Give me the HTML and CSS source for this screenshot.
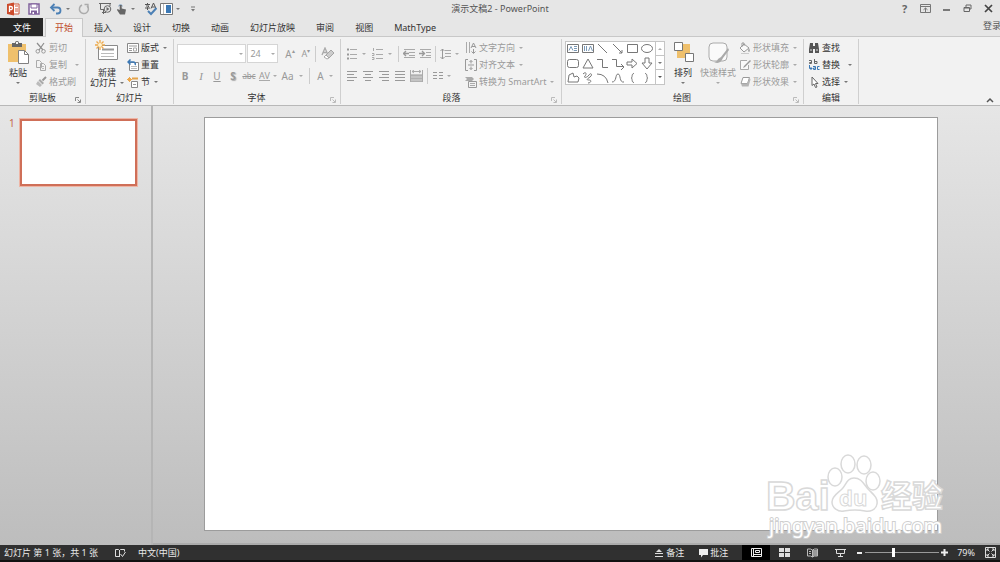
FILE: index.html
```html
<!DOCTYPE html>
<html lang="zh-CN">
<head>
<meta charset="utf-8">
<title>演示文稿2 - PowerPoint</title>
<link rel="stylesheet" href="styles.css">
</head>
<body>
<header class="titlebar">
  <div class="quick">
    <svg class="ico" width="14" height="14" viewBox="0 0 14 14"><path d="M5 2h8v10H5z" fill="#fff" stroke="#d0563a"/><path d="M9 4h3M9 7h3M9 9h3" stroke="#d0563a"/><path d="M1 2l7-1.500v13L1 12z" fill="#cc4b2c"/><path d="M3.500 10V4.500h1.300a1.500 1.500 0 010 3.200H3.500" fill="none" stroke="#fff" stroke-width="1.300"/></svg>
    <button class="tool save" aria-label="保存"><svg class="ico" width="12" height="12" viewBox="0 0 12 12"><path d="M1 1h10v10H1z" fill="#fff" stroke="#80619c" stroke-width="1.500"/><path d="M3 1h6v4H3z" fill="#fff" stroke="#80619c"/><path d="M3 7.500h6V11H3z" fill="#80619c"/><path d="M4.500 9h1.500v2H4.500z" fill="#fff"/></svg></button>
    <button class="tool undo" aria-label="撤消"><svg class="ico" width="14" height="12" viewBox="0 0 14 12"><path d="M2 4.500h6.500a3 3 0 010 6H7" fill="none" stroke="#4c80b5" stroke-width="1.800"/><path d="M5.500 1L2 4.500 5.500 8" fill="none" stroke="#4c80b5" stroke-width="1.800"/></svg><i class="caret"></i></button>
    <button class="tool redo" aria-label="恢复"><svg class="ico" width="12" height="12" viewBox="0 0 12 12"><path d="M4 2a4.500 4.500 0 105 .8" fill="none" stroke="#ababab" stroke-width="1.500"/><path d="M6.500 1.500h3.500V5" fill="none" stroke="#ababab" stroke-width="1.300"/></svg></button>
    <button class="tool show" aria-label="从头开始"><svg class="ico" width="13" height="13" viewBox="0 0 13 13"><path d="M0 1.500h12M1.500 1.500v6H5M11 1.500V4M3 10.500h4M4.500 8v4" fill="none" stroke="#666"/><circle cx="8.500" cy="7" r="3.300" fill="#e6e6e6" stroke="#666"/><path d="M7.500 5l3 2-3 2z" fill="#666"/></svg></button>
    <button class="tool touch" aria-label="触摸模式"><svg class="ico" width="12" height="14" viewBox="0 0 12 14"><path d="M2.500 4a2.500 2.500 0 014 0" fill="none" stroke="#4c80b5"/><path d="M3.700 3v5L1.500 7l-.5 1L4 12.500h5l1-5-4.300-1V3z" fill="#666"/></svg><i class="caret"></i></button>
    <button class="tool spell" aria-label="拼写"><svg class="ico" width="13" height="14" viewBox="0 0 13 14"><path d="M1 2.500h5M3.500 1v1.500M2 4h3L3.500 5.500V8M1 6h5" fill="none" stroke="#555"/><path d="M7 6.500L9.500 1 12 6.500M8 5h3" fill="none" stroke="#555"/><path d="M4 9l3 3 5.500-6" fill="none" stroke="#4c80b5" stroke-width="2"/></svg></button>
    <button class="tool pane" aria-label="窗格"><svg class="ico" width="13" height="12" viewBox="0 0 13 12"><path d="M.5 .5h12v11H.5z" fill="#fff" stroke="#777"/><path d="M6 2h5v8H6z" fill="#3b78b5"/><path d="M3.500 1v10" stroke="#bbb"/></svg><i class="caret"></i></button>
    <button class="tool" aria-label="自定义快速访问工具栏"><svg class="ico" width="6" height="8" viewBox="0 0 6 8"><path d="M1 2h4" stroke="#777"/><path d="M1 4h4L3 6.500z" fill="#777"/></svg></button>
  </div>
  <h1 class="title">演示文稿2 - PowerPoint</h1>
  <div class="window-tools">
    <button class="win help" aria-label="帮助">?</button>
    <button class="win" aria-label="功能区显示选项"><svg class="ico" width="11" height="9" viewBox="0 0 11 9"><path d="M.5 .5h10v8H.5zM.5 2.500h10M5.500 4v4M3.500 5.800l2-1.800 2 1.800" fill="none" stroke="#777"/></svg></button>
    <button class="win" aria-label="最小化"><svg class="ico" width="9" height="9" viewBox="0 0 9 9"><path d="M1 6h7" stroke="#555" stroke-width="1.500"/></svg></button>
    <button class="win" aria-label="还原"><svg class="ico" width="9" height="9" viewBox="0 0 9 9"><path d="M3 3V1h5v4H6.500M1 3.500h5.500v4H1zM1 4h5" fill="none" stroke="#666"/></svg></button>
    <button class="win" aria-label="关闭"><svg class="ico" width="9" height="9" viewBox="0 0 9 9"><path d="M1 1l7 7M8 1L1 8" stroke="#444" stroke-width="1.700"/></svg></button>
  </div>
</header>
<nav class="tabs">
  <button class="tab file">文件</button>
  <button class="tab active">开始</button>
  <button class="tab">插入</button>
  <button class="tab">设计</button>
  <button class="tab">切换</button>
  <button class="tab">动画</button>
  <button class="tab">幻灯片放映</button>
  <button class="tab">审阅</button>
  <button class="tab">视图</button>
  <button class="tab">MathType</button>
  <a class="signin" href="#">登录</a>
</nav>
<section class="ribbon">
  <div class="group clipboard">
    <div class="body">
      <button class="big"><svg class="ico" width="23" height="26" viewBox="0 0 23 26"><path d="M1 4h18v18H1z" fill="#efc06c"/><path d="M5 3h3a2 2 0 014 0h3v4H5z" fill="#666"/><path d="M9 2h2v2H9z" fill="#f2f2f2"/><path d="M11.500 10.500h6l4 4v9h-10z" fill="#fff" stroke="#808080"/><path d="M17.500 10.500v4h4" fill="none" stroke="#808080"/></svg><span>粘贴</span><i class="caret"></i></button>
      <div class="stack">
        <button class="small off"><svg class="ico" width="12" height="12" viewBox="0 0 12 12"><path d="M2 1l6 7M9 1L4 8" stroke="#8d8d8d" stroke-width="1.200"/><circle cx="2.800" cy="9.300" r="1.800" fill="none" stroke="#999"/><circle cx="8.500" cy="9.300" r="1.800" fill="none" stroke="#999"/></svg>剪切</button>
        <button class="small off wide"><svg class="ico" width="12" height="12" viewBox="0 0 12 12"><path d="M1.500 1.500h3l2 2v5h-5zM5.500 4.500h3l2 2v5h-5z" fill="#f2f2f2" stroke="#aaa"/><path d="M7 7.500h2M7 9.500h2" stroke="#bbb"/></svg>复制<i class="caret"></i></button>
        <button class="small off"><svg class="ico" width="12" height="12" viewBox="0 0 12 12"><path d="M11 1L7.500 4.500" stroke="#999" stroke-width="2"/><path d="M5 3l4 4-1.500 1.500-4-4z" fill="#aaa"/><path d="M3 5l4 4-2 2-4-3z" fill="#bbb"/></svg>格式刷</button>
      </div>
    </div>
    <div class="caption">剪贴板<svg class="launch" width="6" height="6" viewBox="0 0 6 6"><path d="M.5 4V.5H4M2.500 2.500L5 5M5.500 2.500v3h-3" fill="none" stroke="#888"/></svg></div>
  </div>
  <div class="group slides">
    <div class="body">
      <button class="big"><svg class="ico" width="24" height="24" viewBox="0 0 24 24"><path d="M3.500 5.500h19v14h-19z" fill="#fff" stroke="#8a8a8a"/><path d="M7 9.500h12" stroke="#999" stroke-width="2"/><path d="M6 13.500h13M6 16.500h13" stroke="#bbb"/><path d="M5 0v10M0 5h10M1.500 1.500l7 7M8.500 1.500l-7 7" stroke="#eda84a" stroke-width="1.300"/><circle cx="5" cy="5" r="2" fill="#fff2cc"/></svg><span>新建</span><span>幻灯片<i class="caret"></i></span></button>
      <div class="stack">
        <button class="small"><svg class="ico" width="12" height="12" viewBox="0 0 12 12"><path d="M.5 1.500h11v9H.5z" fill="#fff" stroke="#888"/><path d="M2 4h8M2 6.500h3M2 8.500h3" stroke="#999"/><path d="M6.500 6h3v3h-3z" fill="none" stroke="#aaa"/></svg>版式<i class="caret"></i></button>
        <button class="small"><svg class="ico" width="12" height="12" viewBox="0 0 12 12"><path d="M2.500 3.500h9v8h-9z" fill="#fff" stroke="#888"/><path d="M4 7.500h6M4 9.500h6" stroke="#bbb"/><path d="M1 3h5a2 2 0 012 3M3.500 .5L1 3l2.500 2.500" fill="none" stroke="#3b78b5" stroke-width="1.500"/></svg>重置</button>
        <button class="small"><svg class="ico" width="12" height="12" viewBox="0 0 12 12"><path d="M5 2.500h6" stroke="#e3a34b" stroke-width="2"/><path d="M4.500 5.500h6v6h-6z" fill="#fff" stroke="#888"/><path d="M6 8.500h3" stroke="#999"/><path d="M2.500 1v5M0 3.500h5M1 2l3 3M4 2L1 5" stroke="#eda84a"/></svg>节<i class="caret"></i></button>
      </div>
    </div>
    <div class="caption">幻灯片</div>
  </div>
  <div class="group font">
    <div class="rows">
      <div class="row">
        <label class="combo name"><select aria-label="字体名称"><option></option></select><i class="caret"></i></label>
        <label class="combo size"><select aria-label="字号"><option>24</option></select><i class="caret"></i></label>
        <button class="glyph grow">A<sup>▴</sup></button>
        <button class="glyph shrink">A<sup>▾</sup></button>
        <i class="sep"></i>
        <button class="glyph" aria-label="清除格式"><svg class="ico" width="14" height="13" viewBox="0 0 14 13"><path d="M1 8l3-7 3 7M2 5.500h4" fill="none" stroke="#aaa" stroke-width="1.300"/><path d="M5 8l5-5 3 3-5 5z" fill="#ccc" stroke="#a5a5a5"/><path d="M5 8l3 3-2 1-3-2z" fill="#fff" stroke="#aaa"/></svg></button>
      </div>
      <div class="row">
        <button class="glyph"><b>B</b></button>
        <button class="glyph serif"><em>I</em></button>
        <button class="glyph"><u>U</u></button>
        <button class="glyph shadow"><b>S</b></button>
        <button class="glyph abc"><s>abc</s></button>
        <button class="glyph spacing"><span class="av">AV</span><i class="caret"></i></button>
        <button class="glyph case">Aa<i class="caret"></i></button>
        <i class="sep"></i>
        <button class="glyph color">A<i class="caret"></i></button>
      </div>
    </div>
    <div class="caption">字体<svg class="launch" width="6" height="6" viewBox="0 0 6 6"><path d="M.5 4V.5H4M2.500 2.500L5 5M5.500 2.500v3h-3" fill="none" stroke="#bbb"/></svg></div>
  </div>
  <div class="group para">
    <div class="body">
      <div class="rows">
        <div class="row">
          <button class="pic list" aria-label="项目符号"><svg class="ico" width="12" height="12" viewBox="0 0 12 12"><path d="M4 1.500h7M4 6.500h7M4 10.500h7" stroke="#aaa"/><path d="M1 1.500h2M1 6.500h2M1 10.500h2" stroke="#999" stroke-width="2"/></svg><i class="caret"></i></button>
          <button class="pic list" aria-label="编号"><svg class="ico" width="12" height="12" viewBox="0 0 12 12"><path d="M4 1.500h7M4 6.500h7M4 10.500h7" stroke="#aaa"/><path d="M1.500 0v3M0 5.500h2v2H0M0 9.500h2v2H0" fill="none" stroke="#aaa"/></svg><i class="caret"></i></button>
          <i class="sep"></i>
          <button class="pic" aria-label="降低列表级别"><svg class="ico" width="12" height="11" viewBox="0 0 12 11"><path d="M1 1.500h11M6 4.500h6M6 7.500h6M1 9.500h11" stroke="#aaa"/><path d="M0 5.500h6M3 3L.5 5.500 3 8" fill="none" stroke="#999" stroke-width="1.300"/></svg></button>
          <button class="pic" aria-label="提高列表级别"><svg class="ico" width="12" height="11" viewBox="0 0 12 11"><path d="M1 1.500h11M7 4.500h5M7 7.500h5M1 9.500h11" stroke="#aaa"/><path d="M0 5.500h6M3 3l2.500 2.500L3 8" fill="none" stroke="#999" stroke-width="1.300"/></svg></button>
          <i class="sep"></i>
          <button class="pic" aria-label="行距"><svg class="ico" width="12" height="12" viewBox="0 0 12 12"><path d="M5 2.500h6M5 5.500h6M5 8.500h6" stroke="#aaa"/><path d="M2.500 1v10M.5 3l2-2 2 2M.5 9l2 2 2-2" fill="none" stroke="#999"/></svg><i class="caret"></i></button>
        </div>
        <div class="row">
          <button class="pic" aria-label="左对齐"><svg class="ico" width="12" height="10" viewBox="0 0 12 10"><path d="M1 .5h10M1 3.500h7M1 6.500h10M1 9.500h7" stroke="#999"/></svg></button>
          <button class="pic" aria-label="居中"><svg class="ico" width="12" height="10" viewBox="0 0 12 10"><path d="M1 .5h10M3 3.500h6M1 6.500h10M3 9.500h6" stroke="#999"/></svg></button>
          <button class="pic" aria-label="右对齐"><svg class="ico" width="12" height="10" viewBox="0 0 12 10"><path d="M1 .5h10M4 3.500h7M1 6.500h10M4 9.500h7" stroke="#999"/></svg></button>
          <button class="pic" aria-label="两端对齐"><svg class="ico" width="12" height="10" viewBox="0 0 12 10"><path d="M1 .5h10M1 3.500h10M1 6.500h10M1 9.500h10" stroke="#999"/></svg></button>
          <button class="pic" aria-label="分散对齐"><svg class="ico" width="13" height="12" viewBox="0 0 13 12"><path d="M.5 0v12M12.500 0v12M2 1.500h9M4 0L2 1.500 4 3M9 0l2 1.500L9 3" fill="none" stroke="#aaa"/><path d="M1 4h11v8H1z" fill="#c4c4c4"/><path d="M1 5.500h11M1 8.500h11M1 11.500h11" stroke="#b0b0b0"/></svg></button>
          <i class="sep"></i>
          <button class="pic" aria-label="分栏"><svg class="ico" width="12" height="10" viewBox="0 0 12 10"><path d="M1 1.500h4M1 4.500h4M1 7.500h4M7 1.500h4M7 4.500h4M7 7.500h4" stroke="#999"/></svg><i class="caret"></i></button>
        </div>
      </div>
      <div class="stack">
        <button class="small off"><svg class="ico" width="12" height="12" viewBox="0 0 12 12"><path d="M1.500 0v11M4.500 0v11" stroke="#aaa"/><path d="M6 6l2.500-5L11 6M7 4.500h3M8.500 7v4M6.500 9.500l2 2 2-2" fill="none" stroke="#999"/></svg>文字方向<i class="caret"></i></button>
        <button class="small off"><svg class="ico" width="12" height="12" viewBox="0 0 12 12"><path d="M3 .5H.5v11H3M9 .5h2.500v11H9M3 6h6M6 1.500v3M6 7.500v3M4.500 3L6 1.500 7.500 3M4.500 9L6 10.500 7.500 9" fill="none" stroke="#999"/></svg>对齐文本<i class="caret"></i></button>
        <button class="small off"><svg class="ico" width="12" height="12" viewBox="0 0 12 12"><path d="M0 1h7l2 2-2 2H0l2-2z" fill="#aaa"/><path d="M3.500 5.500h8v6h-8z" fill="#f2f2f2" stroke="#999"/><path d="M5 7.500h5M5 9.500h5" stroke="#aaa"/></svg>转换为 SmartArt<i class="caret"></i></button>
      </div>
    </div>
    <div class="caption">段落<svg class="launch" width="6" height="6" viewBox="0 0 6 6"><path d="M.5 4V.5H4M2.500 2.500L5 5M5.500 2.500v3h-3" fill="none" stroke="#bbb"/></svg></div>
  </div>
  <div class="group draw">
    <div class="body">
      <div class="gallery">
        <svg class="shapes" width="89" height="43" viewBox="0 0 89 43"><g fill="none" stroke="#777"><path d="M1.500 2.500h11v8h-11zM16.500 2.500h11v8h-11z" fill="#fff"/><path d="M3 8.500l2-4 2 4M8 4.500h3M8 6.500h3M8 8.500h3" stroke="#7b9ab8"/><path d="M18.500 4v5M20.500 4v5M22.500 9l2-5 2 5" stroke="#7b9ab8"/><path d="M32 2l9 9M47 2l9 9M56 8v3h-3M61.500 2.500h10v8h-10z"/><ellipse cx="81" cy="6.500" rx="5.500" ry="4"/><rect x="1.500" y="17.500" width="11" height="8" rx="2"/><path d="M22 17l5 9H17zM31 17.500h5.500v8h5.500M46 17.500h4.500v7h7M55 22l3 3-3 3M61 20h5v-3l5 4.500-5 4.500v-3h-5zM79 16v5h-3l5 6 5-6h-3v-5z"/><path d="M3 33l4-2 1 4 3-1 2 2-1 4H2zM17 32c3-3 4 0 2 2s2 2 4-1 4 0 1 2-4 3-1 3 2 3-1 3M31 32q9 0 11 9M46 40c5 0 3-8 6-8s1 9 6 8M68 31.500c-3 0-1 4.500-3 4.500 2 0 0 4.500 3 4.500M79 31.500c3 0 1 4.500 3 4.500-2 0 0 4.500-3 4.500"/></g></svg>
        <div class="scroll">
          <button aria-label="上一行"><i class="caret up"></i></button>
          <button aria-label="下一行"><i class="caret"></i></button>
          <button aria-label="其他"><i class="caret bar"></i></button>
        </div>
      </div>
      <button class="big arrange"><svg class="ico" width="21" height="24" viewBox="0 0 21 24"><path d="M4 4h13v14H4z" fill="#efc06c"/><path d="M1.500 2.500h8v8h-8zM12.500 13.500h8v8h-8z" fill="#fff" stroke="#777"/></svg><span>排列</span><i class="caret"></i></button>
      <button class="big off"><svg class="ico" width="23" height="24" viewBox="0 0 23 24"><rect x="2" y="3" width="18" height="18" rx="4" fill="#fafafa" stroke="#aaa"/><path d="M21 8l-7 9 2 1 6-8zM14 17l-3 2q-1 3-4 3 6 3 9-4z" fill="#aaa"/></svg><span>快速样式</span><i class="caret"></i></button>
      <div class="stack">
        <button class="small off"><svg class="ico" width="12" height="12" viewBox="0 0 12 12"><path d="M5 2l5 4-5 4-4-4zM3 5V1h2v3" fill="#fafafa" stroke="#999"/><path d="M10 6q2 3 0 4-2-1 0-4z" fill="#aaa"/><path d="M2 11.500h8" stroke="#ccc"/></svg>形状填充<i class="caret"></i></button>
        <button class="small off"><svg class="ico" width="12" height="12" viewBox="0 0 12 12"><path d="M8 1.500H1.500v9h8V6" fill="#fafafa" stroke="#aaa"/><path d="M11 1L5 7 4 9l2-1 6-6z" fill="#999"/></svg>形状轮廓<i class="caret"></i></button>
        <button class="small off"><svg class="ico" width="12" height="12" viewBox="0 0 12 12"><path d="M4 1.500h6.500l-2 6H2z" fill="#fff" stroke="#999"/><path d="M2 7.500h6.500l2-6 1 2-2 7H3z" fill="#b5b5b5"/></svg>形状效果<i class="caret"></i></button>
      </div>
    </div>
    <div class="caption">绘图<svg class="launch" width="6" height="6" viewBox="0 0 6 6"><path d="M.5 4V.5H4M2.500 2.500L5 5M5.500 2.500v3h-3" fill="none" stroke="#bbb"/></svg></div>
  </div>
  <div class="group edit">
    <div class="body">
      <div class="stack">
        <button class="small"><svg class="ico" width="12" height="12" viewBox="0 0 12 12"><path d="M2 1h3v3h2V1h3l1 6v4H7V7H5v4H1V7z" fill="#555"/><path d="M2 8h2M8 8h2" stroke="#ddd"/></svg>查找</button>
        <button class="small wide"><svg class="ico" width="12" height="12" viewBox="0 0 12 12"><path d="M1 1.500h2.500v3H1.500V3.500h2M6.500 0v4.500H9v-2H6.500" fill="none" stroke="#666"/><path d="M5 7.500h2.500v3h-2V9h2M11.500 7.500h-2v3h2M1.500 6v3.500H4M2.500 8L4 9.500 2.500 11" fill="none" stroke="#3b78b5"/></svg>替换<i class="caret"></i></button>
        <button class="small"><svg class="ico" width="12" height="12" viewBox="0 0 12 12"><path d="M4 1v8.500L6 8l1.500 3.500L9 11 7.500 7.500H10z" fill="#fff" stroke="#666"/></svg>选择<i class="caret"></i></button>
      </div>
    </div>
    <div class="caption">编辑</div>
  </div>
  <button class="collapse" aria-label="折叠功能区"><svg class="ico" width="8" height="6" viewBox="0 0 8 6"><path d="M1 5l3-3 3 3" fill="none" stroke="#555" stroke-width="1.500"/></svg></button>
</section>
<main class="workspace">
  <aside class="thumbs"><span class="num">1</span><button class="thumb" aria-label="幻灯片 1"></button></aside>
  <section class="editor"><div class="slide"></div></section>
  <svg class="watermark" width="190" height="94" viewBox="0 0 190 94">
    <g fill="#fff" stroke="#d9d9d9" stroke-width="1.500">
      <text class="logo" x="1" y="60">Bai</text>
      <ellipse cx="70" cy="27" rx="7" ry="9"/><ellipse cx="83" cy="14" rx="7" ry="9"/><ellipse cx="99" cy="15" rx="7" ry="9"/><ellipse cx="108" cy="31" rx="7" ry="9"/>
      <path d="M89 28c8 0 10 7 15 12s9 8 8 14-7 8-12 7-15-1-21 0-12-3-12-9 6-9 10-13 5-11 12-11z"/>
      <text class="du" x="74" y="56">du</text>
      <text class="cjk" x="116" y="57">经验</text>
    </g>
    <text class="url" x="4" y="83">jingyan.baidu.com</text>
  </svg>
</main>
<footer class="status">
  <span class="count">幻灯片 第 1 张，共 1 张</span>
  <button class="flat proof" aria-label="拼写检查"><svg class="ico" width="12" height="10" viewBox="0 0 12 10"><path d="M5 8.500H1.500v-7h3l1 1 1-1h4v2M5.500 2v7" fill="none" stroke="#ddd"/><path d="M6.500 6l2 2.500L11.500 4" fill="none" stroke="#ddd"/></svg></button>
  <button class="flat">中文(中国)</button>
  <div class="right">
    <button class="flat notes"><svg class="ico" width="10" height="10" viewBox="0 0 10 10"><path d="M1 5.500h8M1 8.500h8" stroke="#ddd"/><path d="M5 1l3 3H2z" fill="#ddd"/></svg>备注</button>
    <button class="flat notes"><svg class="ico" width="10" height="10" viewBox="0 0 10 10"><path d="M1 1h9v6H5L3 9.500V7H1z" fill="#eee"/></svg>批注</button>
    <div class="views">
      <button class="view on" aria-label="普通视图"><svg class="ico" width="11" height="9" viewBox="0 0 11 9"><path d="M.5 .5h10v8H.5zM2.500 1v7M4.500 2.500h4v2h-4zM3 6.500h7" fill="none" stroke="#eee"/></svg></button>
      <button class="view" aria-label="幻灯片浏览"><svg class="ico" width="11" height="9" viewBox="0 0 11 9"><path d="M0 0h5v4H0zM6 0h5v4H6zM0 5h5v4H0zM6 5h5v4H6z" fill="#ddd"/></svg></button>
      <button class="view" aria-label="阅读视图"><svg class="ico" width="11" height="10" viewBox="0 0 11 10"><path d="M.5 1h3l2 1 2-1h3v7h-3l-2 1-2-1h-3zM5.500 2v7M2 3.500h2M2 5.500h2" fill="none" stroke="#bbb"/><path d="M6 2h4v6H6z" fill="#999"/></svg></button>
      <button class="view" aria-label="幻灯片放映"><svg class="ico" width="11" height="10" viewBox="0 0 11 10"><path d="M0 1.500h11M1.500 2v3.500h8V2M5.500 5.500v3M3 8.500h5" fill="none" stroke="#ddd"/></svg></button>
    </div>
    <button class="flat zoom" aria-label="缩小"><svg class="ico" width="7" height="7" viewBox="0 0 7 7"><path d="M1 4h5" stroke="#eee" stroke-width="2"/></svg></button>
    <input class="range" type="range" min="0" max="100" value="38" aria-label="缩放">
    <button class="flat zoom" aria-label="放大"><svg class="ico" width="7" height="7" viewBox="0 0 7 7"><path d="M0 3.500h7M3.500 0v7" stroke="#eee" stroke-width="2"/></svg></button>
    <span class="percent">79%</span>
    <button class="flat" aria-label="适应窗口"><svg class="ico" width="11" height="11" viewBox="0 0 11 11"><path d="M.5 .5h10v10H.5z" fill="none" stroke="#ddd"/><path d="M2 4V2h2M7 2h2v2M9 7v2H7M4 9H2V7M2 2l2.500 2.500M9 2L6.500 4.500M9 9L6.500 6.500M2 9l2.500-2.500" fill="none" stroke="#ddd"/></svg></button>
  </div>
</footer>
</body>
</html>
```
FILE: styles.css
```css
* { box-sizing: border-box; }
body {
  margin: 0;
  height: 100vh;
  display: flex;
  flex-direction: column;
  overflow: hidden;
  background: #e6e6e6;
  color: #333;
  font: 9px/12px "Noto Sans", "Noto Sans CJK SC", sans-serif;
}
button, select {
  margin: 0;
  padding: 0;
  border: 0;
  background: none;
  color: inherit;
  font: inherit;
  white-space: nowrap;
}
.ico { display: block; flex: none; }
.caret {
  display: inline-block;
  flex: none;
  border: 2px solid transparent;
  border-top-color: #777;
  border-bottom: 0;
}
.caret.up { border-top: 0; border-bottom: 2px solid #aaa; }
.caret.bar { border-top-color: #555; box-shadow: 0 -2px 0 -1px #555; }

.titlebar {
  flex: none;
  height: 17px;
  display: grid;
  grid-template-columns: 1fr auto 1fr;
  align-items: center;
}
.quick { display: flex; align-items: center; padding-left: 6px; }
.tool { display: flex; align-items: center; gap: 3px; }
.save { margin-left: 8px; }
.undo { margin-left: 9px; }
.redo { margin-left: 8px; }
.show { margin-left: 9px; }
.touch { margin-left: 4px; }
.spell { margin-left: 9px; }
.pane { margin: 0 10px 0 3px; }
.title { margin: 0; font-size: 9px; font-weight: 400; color: #555; }
.window-tools { display: flex; justify-content: flex-end; padding-right: 1px; }
.win { width: 21px; display: flex; justify-content: center; align-items: center; }
.help { font-size: 11px; font-weight: 700; color: #666; }

.tabs { flex: none; height: 20px; display: flex; gap: 1px; padding-top: 1px; border-bottom: 1px solid #c8c8c8; }
.tab { padding: 0 10px; border: 1px solid transparent; border-width: 1px 0 0; }
.tab.file { padding: 0 12px 0 13px; margin-right: 1px; background: #262626; color: #fff; }
.tab.active { margin-bottom: -1px; background: #f2f2f2; border: 1px solid #c8c8c8; border-bottom: 0; padding: 0 9px; color: #c0502f; }
.signin { margin-left: auto; margin-right: -1px; padding-top: 2px; color: #555; text-decoration: none; }

.ribbon { flex: none; display: flex; height: 69px; padding-top: 2px; background: #f2f2f2; border-bottom: 1px solid #b8b8b8; }
.group { display: flex; flex-direction: column; flex: none; border-right: 1px solid #cfcfcf; margin-bottom: 1px; padding: 0 4px; }
.body { flex: none; display: flex; height: 51px; }
.caption { display: flex; justify-content: center; align-items: center; position: relative; height: 14px; padding-top: 1px; color: #333; }
.launch { position: absolute; right: 0; bottom: 1px; }
.big { display: flex; flex-direction: column; align-items: center; line-height: 10px; }
.big .ico { margin: 1px 0 4px; }
.big .caret { margin-top: 4px; }
.big span .caret { margin: 0 0 2px 3px; }
.big.off, .small.off { color: #9a9a9a; }
.off .caret { border-top-color: #aaa; }
.stack { display: flex; flex-direction: column; }
.small { display: flex; align-items: center; gap: 2px; height: 17px; }
.small .caret { margin-left: 2px; }
.small.wide .caret { margin-left: 6px; }

.clipboard { width: 86px; }
.clipboard .big { width: 28px; margin-right: 3px; }
.clipboard .big .ico { margin-bottom: 2px; }
.slides { width: 88px; }
.slides .big { width: 34px; margin-right: 3px; }
.font { width: 167px; padding-left: 3px; }
.para { width: 221px; padding-left: 5px; }
.draw { width: 242px; padding-left: 3px; }
.edit { width: 55px; }

.rows { flex: none; display: flex; flex-direction: column; gap: 3px; height: 51px; padding-top: 5px; }
.row { flex: none; display: flex; align-items: center; height: 19px; color: #999; }
.row .caret { border-top-color: #aaa; }
.sep { flex: none; width: 1px; height: 16px; background: #ccc; }
.combo { display: flex; align-items: center; height: 19px; padding: 0 2px; background: #fff; border: 1px solid #d5d5d5; }
.combo select { flex: 1; min-width: 0; appearance: none; outline: 0; }
.combo.name { width: 73px; margin-right: 1px; }
.combo.size { width: 32px; margin-right: 4px; }
.glyph { flex: none; width: 16px; display: flex; justify-content: center; align-items: center; gap: 5px; font-size: 10px; }
.glyph sup { font-size: 6px; line-height: 6px; margin: 0 0 6px -5px; }
.font .row:first-child .sep { margin: 0 4px 0 1px; }
.shrink { font-size: 9px; }
.serif { font-family: "Liberation Serif", serif; font-size: 11px; }
.shadow { text-shadow: 1px 1px 1px #aaa; }
.abc { font-size: 8px; }
.spacing { width: 22px; font-size: 9px; gap: 3px; }
.av { line-height: 9px; border-bottom: 1px solid #aaa; }
.case { width: 26px; }
.font .row:last-child .sep { margin: 0 1px 0 4px; }
.color { width: 28px; }

.para .rows { width: 119px; }
.pic { display: flex; align-items: center; width: 16px; gap: 3px; }
.pic.list { width: 26px; gap: 4px; }
.para .sep { margin: 0 4px 0 0; }
.para .row:last-child .sep { margin-left: 1px; }

.gallery { display: flex; width: 100px; height: 44px; margin-top: 2px; border: 1px solid #c5c5c5; background: #fff; }
.shapes { flex: none; display: block; }
.scroll { flex: 1; display: grid; grid-template-rows: repeat(3, 1fr); border-left: 1px solid #c5c5c5; }
.scroll button { display: flex; align-items: center; justify-content: center; border-bottom: 1px solid #c5c5c5; }
.scroll button:last-child { border-bottom: 0; }
.big.arrange { width: 32px; margin: 0 1px 0 2px; }
.draw .stack { margin-left: 3px; }

.collapse { margin: auto 6px 2px auto; }

.workspace { flex: 1; min-height: 0; display: flex; position: relative; background: linear-gradient(#e6e6e6, #bdbdbd); }
.thumbs { flex: none; width: 153px; display: flex; align-items: flex-start; gap: 5px; padding: 12px 13px 0 9px; border-right: 2px solid #b5b5b5; color: #c4654d; }
.num { width: 5px; line-height: 10px; font-size: 10px; }
.thumb { flex: 1; height: 69px; background: #fff; border: 1px solid #eeb5a5; box-shadow: inset 0 0 0 2px #cf6f58; }
.editor { flex: 1; display: flex; padding: 11px 62px 12px 51px; border-bottom: 2px solid #acacac; }
.slide { flex: 1; background: #fff; border: 1px solid #9c9c9c; }
.watermark { position: absolute; right: 45px; bottom: 1px; pointer-events: none; }
.logo { font: 700 41px "Liberation Sans", sans-serif; }
.du { font: 700 22px "Open Sans", sans-serif; stroke-width: 1px; }
.cjk { font: 700 31px "Noto Sans CJK SC", sans-serif; }
.url { font: 20px "Noto Sans", sans-serif; fill: #fff; stroke: #cfcfcf; stroke-width: 2px; paint-order: stroke; }

.status { flex: none; display: flex; align-items: center; height: 17px; padding: 0 4px; background: #303030; border-bottom: 2px solid #111; color: #e8e8e8; }
.proof { margin: 0 12px 0 16px; }
.flat { display: flex; align-items: center; gap: 2px; }
.right { margin-left: auto; display: flex; align-items: center; }
.notes { margin-right: 14px; }
.views { display: flex; }
.view { width: 28px; height: 15px; display: flex; align-items: center; justify-content: center; }
.view.on { background: #000; }
.zoom { margin: 0 2px; }
.range { width: 74px; height: 13px; margin: 0; appearance: none; background: linear-gradient(#999, #999) center / 100% 1px no-repeat; }
.range::-webkit-slider-thumb { appearance: none; width: 3px; height: 9px; background: #fff; }
.percent { margin: 0 10px 0 7px; }
```
